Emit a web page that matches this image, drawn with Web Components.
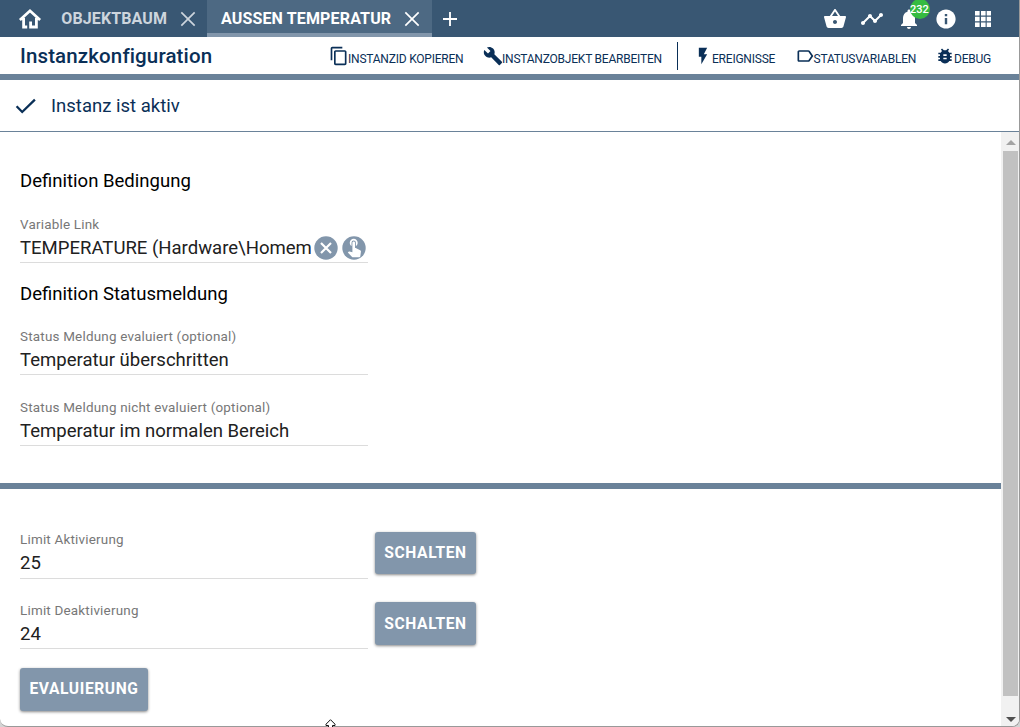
<!DOCTYPE html>
<html lang="de">
<head>
<meta charset="utf-8">
<title>Instanzkonfiguration</title>
<style>
html,body{margin:0;height:100%;overflow:hidden;background:#d4d4d4}
body{font-family:Roboto,"Liberation Sans",sans-serif;color:#0a2f57}
</style>
</head>
<body>
<console-window></console-window>
<script>
const define=(name,html)=>customElements.define(name,class extends HTMLElement{
  constructor(){super();this.attachShadow({mode:'open'});}
  connectedCallback(){
    if(this.shadowRoot.childNodes.length)return;
    const t=document.createElement('template');
    t.innerHTML=typeof html==='function'?html(this):html;
    this.shadowRoot.append(t.content.cloneNode(true));
  }
});
const icons={
home:'<path fill="none" stroke="currentColor" stroke-width="2.8" d="M1.9 13 12 3.8 22.1 13M5.6 11V20H9.2M18.4 11V20H12.6V14.5"/>',
x:'<path fill="none" stroke="currentColor" stroke-width="2" d="M4 4 20 20M20 4 4 20"/>',
plus:'<path fill="none" stroke="currentColor" stroke-width="2.8" d="M12 1.5V22.5M1.5 12H22.5"/>',
basket:'<path fill="currentColor" d="M17.21 9l-4.38-6.56c-.19-.28-.51-.42-.83-.42-.32 0-.64.14-.83.43L6.79 9H2c-.55 0-1 .45-1 1 0 .09.01.18.04.27l2.54 9.27c.23.84 1 1.46 1.92 1.46h13c.92 0 1.69-.62 1.93-1.46l2.54-9.27L23 10c0-.55-.45-1-1-1h-4.79zM9 9l3-4.4L15 9H9zm3 8c-1.1 0-2-.9-2-2s.9-2 2-2 2 .9 2 2-.9 2-2 2z"/>',
timeline:'<path fill="currentColor" d="M23 8c0 1.1-.9 2-2 2-.18 0-.35-.02-.51-.07l-3.56 3.55c.05.16.07.34.07.52 0 1.1-.9 2-2 2s-2-.9-2-2c0-.18.02-.36.07-.52l-2.55-2.55c-.16.05-.34.07-.52.07s-.36-.02-.52-.07l-4.55 4.56c.05.16.07.33.07.51 0 1.1-.9 2-2 2s-2-.9-2-2 .9-2 2-2c.18 0 .35.02.51.07l4.56-4.55C8.02 9.36 8 9.18 8 9c0-1.1.9-2 2-2s2 .9 2 2c0 .18-.02.36-.07.52l2.55 2.55c.16-.05.34-.07.52-.07s.36.02.52.07l3.55-3.56C19.02 8.35 19 8.18 19 8c0-1.1.9-2 2-2s2 .9 2 2z"/>',
bell:'<path fill="currentColor" d="M12 22c1.1 0 2-.9 2-2h-4c0 1.1.89 2 2 2zm6-6v-5c0-3.07-1.64-5.64-4.5-6.32V4c0-.83-.67-1.5-1.5-1.5s-1.5.67-1.5 1.5v.68C7.63 5.36 6 7.92 6 11v5l-2 2v1h16v-1l-2-2z"/>',
info:'<path fill="currentColor" d="M12 2.4C6.7 2.4 2.4 6.7 2.4 12s4.3 9.6 9.6 9.6 9.6-4.3 9.6-9.6S17.3 2.4 12 2.4z"/><path fill="#395773" d="M10.8 7h2.4v2.2h-2.4zM10.8 11h2.4v6.2h-2.4z"/>',
apps:'<path fill="currentColor" d="M4 8.6h4.6V4H4v4.6zm6 11.4h4.6v-4.6H10V20zm-6 0h4.6v-4.6H4V20zm0-5.8h4.6V9.7H4v4.5zm6 0h4.6V9.7H10v4.5zM15.7 4v4.6H20V4h-4.3zM10 8.6h4.6V4H10v4.6zm5.7 5.6H20V9.7h-4.3v4.5zm0 5.8H20v-4.6h-4.3V20z"/>',
copy:'<path fill="currentColor" d="M16 1H4c-1.1 0-2 .9-2 2v14h2V3h12V1zm3 4H8c-1.1 0-2 .9-2 2v14c0 1.1.9 2 2 2h11c1.1 0 2-.9 2-2V7c0-1.1-.9-2-2-2zm0 16H8V7h11v14z"/>',
wrench:'<path fill="currentColor" d="M22.7 19l-9.1-9.1c.9-2.3.4-5-1.5-6.9-2-2-5-2.4-7.4-1.3L9 6 6 9 1.6 4.7C.4 7.1.9 10.1 2.9 12.1c1.9 1.9 4.6 2.4 6.9 1.5l9.1 9.1c.4.4 1 .4 1.4 0l2.3-2.3c.5-.4.5-1.1.1-1.4z"/>',
flash:'<path fill="currentColor" d="M7 2v11h3v9l7-12h-4l4-8z"/>',
label:'<path fill="currentColor" d="M17.63 5.84C17.27 5.33 16.67 5 16 5L5 5.01C3.9 5.01 3 5.9 3 7v10c0 1.1.9 1.99 2 1.99L16 19c.67 0 1.27-.33 1.63-.84L22 12l-4.37-6.16zM16 17H5V7h11l3.55 5L16 17z"/>',
bug:'<path fill="currentColor" d="M20 8h-2.81c-.45-.78-1.07-1.45-1.82-1.96L17 4.41 15.59 3l-2.17 2.17C12.96 5.06 12.49 5 12 5c-.49 0-.96.06-1.41.17L8.41 3 7 4.41l1.62 1.63C7.88 6.55 7.26 7.22 6.81 8H4v2h2.09c-.05.33-.09.66-.09 1v1H4v2h2v1c0 .34.04.67.09 1H4v2h2.81c1.04 1.79 2.97 3 5.19 3s4.15-1.21 5.19-3H20v-2h-2.09c.05-.33.09-.66.09-1v-1h2v-2h-2v-1c0-.34-.04-.67-.09-1H20V8zm-6 8h-4v-2h4v2zm0-4h-4v-2h4v2z"/>',
check:'<path fill="none" stroke="currentColor" stroke-width="2.3" d="M2.6 12.3 8.2 18 20.9 5.6"/>',
clear:'<circle cx="12" cy="12" r="11.7" fill="#8296ab"/><path fill="none" stroke="#fff" stroke-width="2.2" d="M7 7 17 17M17 7 7 17"/>',
touch:'<circle cx="12" cy="12" r="11.7" fill="#8296ab"/><g transform="translate(1.6 .2) scale(.88)"><path fill="#fff" d="M9 11.24V7.5a2.5 2.5 0 0 1 5 0v3.74c1.21-.81 2-2.18 2-3.74C16 5.01 13.99 3 11.5 3S7 5.01 7 7.5c0 1.56.79 2.93 2 3.74zm9.84 4.63-4.54-2.26c-.17-.07-.35-.11-.54-.11H13v-6c0-.83-.67-1.5-1.5-1.5S10 6.67 10 7.5v10.74l-3.43-.72c-.08-.01-.15-.03-.24-.03-.31 0-.59.13-.79.33l-.79.8 4.94 4.94c.27.27.65.44 1.06.44h6.79c.75 0 1.33-.55 1.44-1.28l.75-5.27c.01-.07.02-.14.02-.2 0-.62-.38-1.16-.91-1.38z"/></g>',
up:'<path fill="#a3a3a3" d="M0 17 12 5 24 17z"/>',
down:'<path fill="#505050" d="M0 7 12 19 24 7z"/>'
};
define('ui-icon',e=>`<style>:host{display:block;flex:none;width:${e.getAttribute('size')||24}px;height:${e.getAttribute('size')||24}px}svg{display:block;width:100%;height:100%}</style><svg viewBox="0 0 24 24">${icons[e.getAttribute('name')]}</svg>`);

define('ui-tab',`<style>
:host{display:flex;align-items:center;height:37px;box-sizing:border-box;font:700 16px/37px Roboto,sans-serif;color:#cdd5dd;white-space:nowrap}
:host([active]){background:#4d6983;color:#fff;box-shadow:inset 0 -4px #8296ab}
ui-icon{margin-left:10.5px}
</style><span><slot></slot></span><ui-icon name="x" size="20"></ui-icon>`);

define('tab-bar',`<style>
:host{display:flex;height:37px;background:#395773;color:#fff}
.home{margin:7px 0 0 18px}
.first{padding-left:19.3px;width:165.4px;letter-spacing:.12px}
.second{padding-left:13.6px;width:224.6px;letter-spacing:.15px}
.plus{margin:11px 0 0 10px}
.tools{margin-left:auto;display:flex;gap:13px;padding:7px 24.5px 0 0}
.note{position:relative}
.badge{position:absolute;left:13px;top:-8px;width:20px;height:20px;border-radius:50%;background:#35bb41;font:500 11px/21px Roboto,sans-serif;text-align:center}
</style>
<ui-icon class="home" name="home"></ui-icon>
<ui-tab class="first">OBJEKTBAUM</ui-tab><ui-tab class="second" active>AUSSEN TEMPERATUR</ui-tab>
<ui-icon class="plus" name="plus" size="16"></ui-icon>
<div class="tools"><ui-icon name="basket"></ui-icon><ui-icon name="timeline"></ui-icon>
<div class="note"><ui-icon name="bell"></ui-icon><div class="badge">232</div></div>
<ui-icon name="info"></ui-icon><ui-icon name="apps"></ui-icon></div>`);

define('tool-action',e=>`<style>
:host{display:flex;font:400 12px/16px Roboto,sans-serif;letter-spacing:-.22px;white-space:nowrap;color:#0a2f57}
span{padding-top:14px;margin-left:-1px}ui-icon{margin-top:9px}
</style><ui-icon name="${e.getAttribute('icon')}" size="20"></ui-icon><span><slot></slot></span>`);

define('title-bar',`<style>
:host{display:flex;height:37px;border-bottom:6px solid #6a8299;background:#fff}
h1{margin:0;padding-left:20px;width:309px;font:500 20.5px/38px Roboto,sans-serif;letter-spacing:.13px;color:#0a2f57}
.a{width:154px}.b{width:194px}.c{width:101.5px}.d{width:140.5px}
i{width:1px;height:28px;margin:5px 15px 0 0;background:#0a2f57}
</style><h1>Instanzkonfiguration</h1>
<tool-action class="a" icon="copy">INSTANZID KOPIEREN</tool-action>
<tool-action class="b" icon="wrench">INSTANZOBJEKT BEARBEITEN</tool-action><i></i>
<tool-action class="c" icon="flash">EREIGNISSE</tool-action>
<tool-action class="d" icon="label">STATUSVARIABLEN</tool-action>
<tool-action icon="bug">DEBUG</tool-action>`);

define('status-line',`<style>
:host{display:flex;height:51px;border-bottom:1px solid #6a8299;background:#fff;font:400 18.55px/52px Roboto,sans-serif;color:#0a2f57}
ui-icon{margin:14px 13px 0 14px}
</style><ui-icon name="check" size="24"></ui-icon><span><slot></slot></span>`);

define('form-field',e=>`<style>
:host{display:block;width:348px;height:48px;box-sizing:border-box;border-bottom:1px solid #dcdcdc}
.label{font:400 13.45px/16px Roboto,sans-serif;color:#777;letter-spacing:.2px;white-space:nowrap}
.row{display:flex;align-items:center;height:30px}
.value{font:400 18.55px/30px Roboto,sans-serif;color:#212121;white-space:nowrap}
</style><div class="label">${e.getAttribute('label')}</div><div class="row"><span class="value">${e.getAttribute('value')}</span><slot></slot></div>`);

define('ui-button',`<style>
:host{display:block;box-sizing:border-box;height:42px;border-radius:3px;background:#8296ab;box-shadow:0 1px 3px #0007;color:#fff;text-align:center;font:700 15.6px/42px Roboto,sans-serif;letter-spacing:.6px;white-space:nowrap}
</style><slot></slot>`);

define('scroll-track',`<style>
:host{display:flex;flex-direction:column;box-sizing:border-box;width:18px;padding-left:1px;background:#f1f1f1;align-items:center}
.up{margin:6px 0 3px}.thumb{width:15px;height:545px;background:#c1c1c1}.down{margin-top:18px}
</style><ui-icon class="up" name="up" size="10"></ui-icon><div class="thumb"></div><ui-icon class="down" name="down" size="10"></ui-icon>`);

define('config-form',`<style>
:host{display:block;flex:1;min-width:0;color:#000}
.top{box-sizing:border-box;height:351px;padding:36px 20px 0}
h2{margin:0;font:400 18.55px/26px Roboto,sans-serif}
.f1{margin-top:23px;height:46px}.h{margin-top:18px}.f2{margin-top:21.5px;height:46.5px}.f3{margin-top:25px;height:46px}
.clear{margin:-1px 0 0 2px}.touch{margin:-1px 0 0 4px}
.rule{height:6px;background:#6a8299}
.bottom{padding:40px 20px 0}
.line{display:flex;gap:7px;height:70px}
.line form-field{height:50px;padding-top:3px}
.line + .line form-field{padding-top:4px}
.line ui-button{width:101px;margin-top:3px}
.line + .line ui-button{height:43px;line-height:44px}
.ev{width:128px;margin-top:-1px;height:43px}
</style>
<div class="top"><h2>Definition Bedingung</h2>
<form-field class="f1" label="Variable Link" value="TEMPERATURE (Hardware\\Homem"><ui-icon class="clear" name="clear"></ui-icon><ui-icon class="touch" name="touch"></ui-icon></form-field>
<h2 class="h">Definition Statusmeldung</h2>
<form-field class="f2" label="Status Meldung evaluiert (optional)" value="Temperatur überschritten"></form-field>
<form-field class="f3" label="Status Meldung nicht evaluiert (optional)" value="Temperatur im normalen Bereich"></form-field></div>
<div class="rule"></div>
<div class="bottom"><div class="line"><form-field label="Limit Aktivierung" value="25"></form-field><ui-button>SCHALTEN</ui-button></div>
<div class="line"><form-field label="Limit Deaktivierung" value="24"></form-field><ui-button>SCHALTEN</ui-button></div>
<ui-button class="ev">EVALUIERUNG</ui-button></div>`);

define('mouse-cursor',`<style>
:host{position:absolute;left:325px;top:719px;width:11px;height:8px}svg{display:block}
</style><svg width="11" height="8"><path d="M5.5 .7 10 5.2V6.5H7.5V9H3.5V6.5H1V5.2z" fill="#fff" stroke="#111"/></svg>`);

define('console-window',`<style>
:host{display:block;position:relative;width:1020px;height:727px;overflow:hidden}
.frame{box-sizing:border-box;width:1020px;height:727px;border:solid #999;border-width:0 1px 1px 0;border-radius:0 0 8px 8px;overflow:hidden;background:#fff;display:flex;flex-direction:column}
.main{flex:1;display:flex;min-height:0}
</style><div class="frame"><tab-bar></tab-bar><title-bar></title-bar><status-line>Instanz ist aktiv</status-line>
<div class="main"><config-form></config-form><scroll-track></scroll-track></div></div><mouse-cursor></mouse-cursor>`);
</script>
</body>
</html>
